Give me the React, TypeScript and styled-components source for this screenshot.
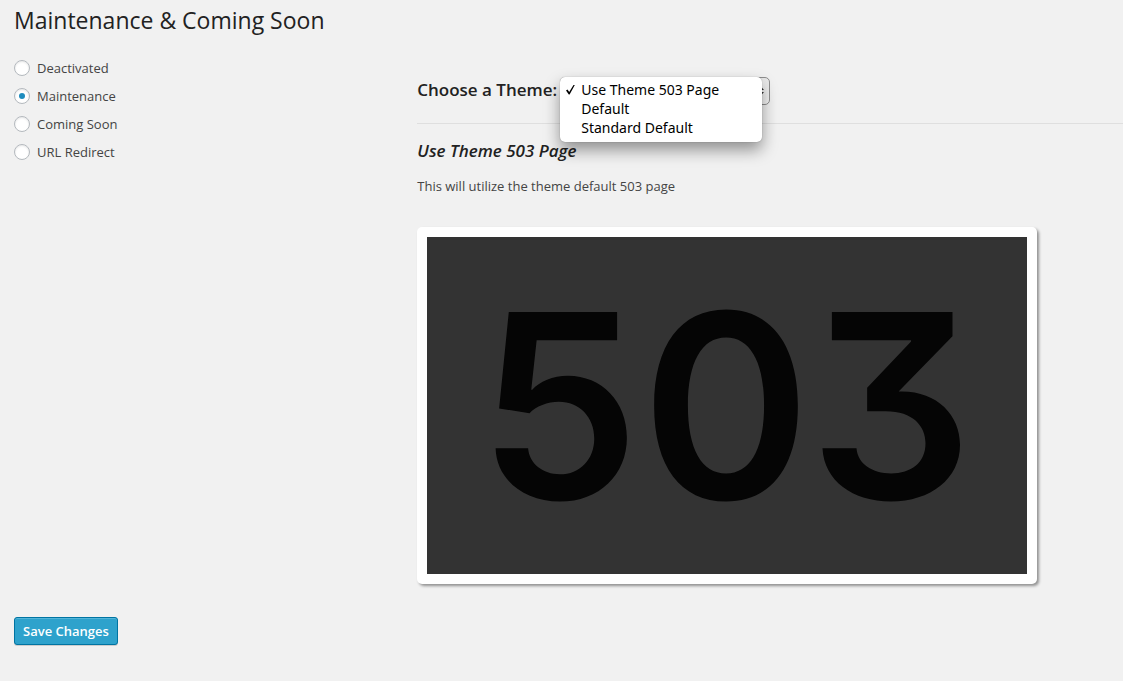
import React, { useState } from "react";
import styled, { createGlobalStyle } from "styled-components";

const GlobalStyle = createGlobalStyle`
  *, *::before, *::after { box-sizing: border-box; }
  body {
    margin: 0;
    background: #f1f1f1;
    color: #444;
    font-family: "Open Sans", "Noto Sans", sans-serif;
    font-size: 13px;
    line-height: 20px;
  }
`;

const Page = styled.main`
  padding: 4px 0 36px 14px;
`;

const PageTitle = styled.h1`
  margin: 0;
  color: #222;
  font-size: 23px;
  font-weight: 400;
  line-height: 32px;
`;

const Columns = styled.div`
  display: grid;
  grid-template-columns: minmax(0, 4fr) minmax(0, 7fr);
  padding-top: 22px;
`;

const ModeList = styled.fieldset`
  display: flex;
  flex-direction: column;
  align-items: flex-start;
  gap: 8px;
  margin: 0;
  padding: 0;
  border: 0;
`;

const ModeLabel = styled.label`
  display: flex;
  align-items: center;
  gap: 7px;
`;

const Radio = styled.input`
  display: grid;
  place-content: center;
  appearance: none;
  width: 16px;
  height: 16px;
  margin: 0;
  border: 1px solid #b4b9be;
  border-radius: 50%;
  background: #fff;
  box-shadow: inset 0 1px 2px rgba(0, 0, 0, 0.1);

  &:checked::before {
    content: "";
    width: 6px;
    height: 6px;
    border-radius: 50%;
    background: #1e8cbe;
  }
`;

const ThemeRow = styled.div`
  display: flex;
  align-items: center;
  gap: 3px;
  height: 66px;
  border-bottom: 1px solid #dfdfdf;
`;

const ThemeLabel = styled.label`
  padding-bottom: 2px;
  color: #222;
  font-size: 17px;
  font-weight: 600;
  line-height: 24px;
  white-space: nowrap;
`;

const SelectBox = styled.div`
  position: relative;
  width: 210px;
`;

const Select = styled.select`
  display: block;
  appearance: none;
  width: 100%;
  height: 28px;
  padding: 0 20px 0 20px;
  border: 1px solid #8e8e8e;
  border-radius: 5px;
  background: linear-gradient(#e9e9e9, #f4f4f4);
  color: #000;
  font-family: "Noto Sans", sans-serif;
  font-size: 14px;
`;

const Arrows = styled.svg`
  position: absolute;
  top: 9px;
  right: 6px;
  pointer-events: none;
`;

const Menu = styled.ul`
  position: absolute;
  z-index: 1;
  top: 0;
  left: 0;
  width: 202px;
  margin: 0;
  padding: 3px 0 5px;
  border-radius: 5px;
  background: #fff;
  box-shadow: 0 0 1px rgba(0, 0, 0, 0.4), 0 8px 16px rgba(0, 0, 0, 0.4);
  color: #000;
  font-family: "Noto Sans", sans-serif;
  font-size: 14px;
  line-height: 19px;
  list-style: none;
`;

const MenuItem = styled.li`
  display: grid;
  grid-template-columns: 16px 1fr;
  align-items: center;
  padding-left: 5px;
`;

const ThemeName = styled.h2`
  margin: 15px 0 0;
  color: #222;
  font-size: 17px;
  font-style: italic;
  font-weight: 600;
  line-height: 24px;
`;

const Description = styled.p`
  margin: 13px 0 31px;
`;

const PreviewFrame = styled.div`
  max-width: 620px;
  padding: 10px;
  border-radius: 5px;
  background: #fff;
  box-shadow: 2px 2px 3px rgba(0, 0, 0, 0.4);
`;

const Preview = styled.svg`
  display: block;
  width: 100%;
  background: #333;

  text {
    fill: #050505;
    font-family: Inter, sans-serif;
    font-size: 257px;
    font-weight: 600;
    font-feature-settings: "cv09";
    text-anchor: middle;
  }
`;

const SaveButton = styled.button`
  display: block;
  height: 28px;
  margin-top: 33px;
  padding: 0 8px;
  border: 1px solid #0074a2;
  border-radius: 3px;
  background: #2ea2cc;
  box-shadow: inset 0 1px 0 rgba(120, 200, 230, 0.5), 0 1px 0 rgba(0, 0, 0, 0.15);
  color: #fff;
  font-family: inherit;
  font-size: 13px;
  font-weight: 600;
  line-height: 26px;
`;

const modes = ["Deactivated", "Maintenance", "Coming Soon", "URL Redirect"];
const themes = ["Use Theme 503 Page", "Default", "Standard Default"];

export default function App() {
  const [mode, setMode] = useState("Maintenance");
  const [theme, setTheme] = useState(themes[0]);

  return (
    <Page>
      <GlobalStyle />
      <PageTitle>Maintenance &amp; Coming Soon</PageTitle>
      <Columns>
        <ModeList aria-label="Mode">
          {modes.map((name) => (
            <ModeLabel key={name}>
              <Radio type="radio" name="mode" checked={mode === name} onChange={() => setMode(name)} />
              {name}
            </ModeLabel>
          ))}
        </ModeList>
        <section>
          <ThemeRow>
            <ThemeLabel htmlFor="theme">Choose a Theme:</ThemeLabel>
            <SelectBox>
              <Select id="theme" value={theme} onChange={(e) => setTheme(e.target.value)}>
                {themes.map((name) => (
                  <option key={name}>{name}</option>
                ))}
              </Select>
              <Arrows width="7" height="10" viewBox="0 0 7 10" aria-hidden="true">
                <path d="M0 4 3.500 0 7 4ZM0 6h7L3.500 10Z" fill="#333" />
              </Arrows>
              <Menu role="listbox" aria-label="Theme">
                {themes.map((name) => (
                  <MenuItem key={name} role="option" aria-selected={theme === name} onClick={() => setTheme(name)}>
                    <svg width="11" height="11" viewBox="0 0 11 11" aria-hidden="true">
                      {theme === name && <path d="M1 6.500 2.500 5.500 4.200 8 8.500 1 9.800 1 4.600 10.500 3.800 10.500Z" />}
                    </svg>
                    {name}
                  </MenuItem>
                ))}
              </Menu>
            </SelectBox>
          </ThemeRow>
          <ThemeName>{theme}</ThemeName>
          <Description>This will utilize the theme default 503 page</Description>
          <PreviewFrame>
            <Preview viewBox="0 0 600 337" role="img" aria-label="503 page preview">
              <text x="132 299 464" y="262">503</text>
            </Preview>
          </PreviewFrame>
        </section>
      </Columns>
      <SaveButton type="button">Save Changes</SaveButton>
    </Page>
  );
}
